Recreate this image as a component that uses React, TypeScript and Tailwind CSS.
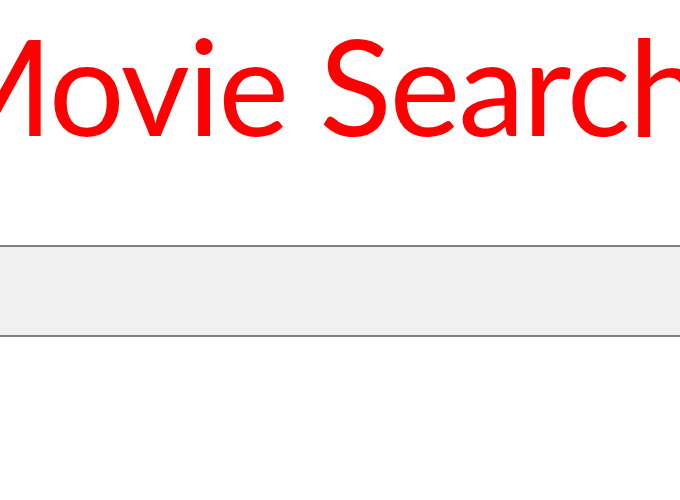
import React from "react";

export default function App() {
  return (
    <div className="w-[680px] h-[500px] overflow-hidden bg-white" style={{ fontFamily: "Lato, 'Open Sans', sans-serif" }}>
      {/* Title */}
      <div className="flex justify-center pt-[10px] pr-[50px]">
        <h1 className="whitespace-nowrap text-[134px] leading-[150px] tracking-[-2px] font-normal text-[#ff0000] shrink-0">
          Movie Search
        </h1>
      </div>

      {/* Search field */}
      <div className="mt-[85px]">
        <input
          type="text"
          className="block w-full h-[92px] bg-[#f0f0f0] border-y-2 border-[#808080] outline-none"
        />
      </div>
    </div>
  );
}
